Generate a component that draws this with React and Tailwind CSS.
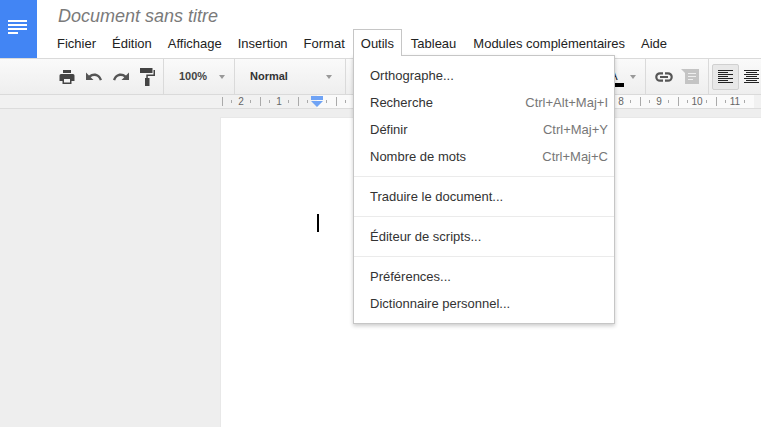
function Caret({ className = "" }) {
  return <span className={"block w-0 h-0 border-x-[3px] border-x-transparent border-t-[4px] border-t-[#999] " + className} />;
}
function Sep() {
  return <div className="w-px h-[35px] bg-[#dadada] shrink-0" />;
}
function Print() {
  return (
    <svg width="16" height="16" viewBox="0 0 16 16" className="block">
      <path fill="#444" d="M4 1h8v3H4z" />
      <path fill="#444" fillRule="evenodd" d="M2 5h12a1.5 1.5 0 0 1 1.5 1.5V12H12.5v3h-9v-3H.5V6.500A1.500 1.500 0 0 1 2 5zM5 10v3.500h6V10z" />
    </svg>
  );
}
function Undo({ flip }) {
  return (
    <svg width="16" height="12" viewBox="0 0 16 12" className={flip ? "block -scale-x-100" : "block"}>
      <path fill="#555" d="M0 1.500v7.500h7.500L4.700 6.200C5.700 5.400 6.900 5 8.300 5c2.500 0 4.600 1.400 5.500 4.500l2.200-.7C14.800 4.800 11.800 2.500 8.300 2.500c-2 0-3.800.7-5.300 2z" />
    </svg>
  );
}
function Paint() {
  return (
    <svg width="16" height="18" viewBox="0 0 16 18" className="block">
      <path fill="#444" d="M0 0h12.500v5H0z" />
      <path fill="#444" d="M13.500 2H15v6H7.800v2H9.500v8H5v-8h1.300V6.500h7.200z" />
    </svg>
  );
}
function LinkIcon() {
  return (
    <svg width="18" height="10" viewBox="0 0 18 10" className="block">
      <path fill="none" stroke="#555" strokeWidth="2.200" d="M8 1.300H5a3.700 3.700 0 0 0 0 7.400h3M10 1.300h3a3.700 3.700 0 0 1 0 7.400h-3M5 5h8" />
    </svg>
  );
}
function Comment() {
  return (
    <svg width="18" height="15" viewBox="0 0 18 15" className="block">
      <path fill="#c4c4c4" d="M4 0h14v15H4V4L0 0z" />
      <path fill="#eee" d="M7 4h8v1H7zM7 7h8v1H7zM7 10h5v1H7z" />
    </svg>
  );
}
function Align({ center }) {
  const rows = center
    ? [[0, 15], [2, 11], [0, 15], [2, 11], [0, 15], [2, 11], [0, 15]]
    : [[0, 15], [0, 10], [0, 15], [0, 10], [0, 15], [0, 10], [0, 15]];
  return (
    <svg width="15" height="13" viewBox="0 0 15 13" className="block">
      {rows.map(([x, w], i) => (
        <rect key={i} x={x} y={i * 2} width={w} height="1" fill="#222" />
      ))}
    </svg>
  );
}
function Ruler() {
  const cells = [2, 1, 0, 1, 2, 3, 4, 5, 6, 7, 8, 9, 10, 11];
  return (
    <div className="flex h-[13px] pl-[222px] bg-[#f1f1f1] border-b border-[#dcdcdc] shrink-0 overflow-hidden box-content">
      {cells.map((n, i) => (
        <div
          key={i}
          className={
            "flex w-[38px] shrink-0 h-full items-center " +
            (i > 2 ? "bg-[#fafafa]" : i === 2 ? "bg-[linear-gradient(to_right,#f1f1f1_50%,#fafafa_50%)]" : "")
          }
        >
          <span className="w-px h-[9px] bg-[#aaa] shrink-0" />
          <span className="w-[8px] shrink-0" />
          <span className="w-px h-[3px] bg-[#aaa] shrink-0" />
          <span className="w-[18px] shrink-0 text-center text-[10px] leading-none text-[#666]">
            {i >= 2 && i <= 9 ? "" : n}
          </span>
          <span className="w-px h-[3px] bg-[#aaa] shrink-0" />
        </div>
      ))}
    </div>
  );
}
function Row({ label, shortcut }) {
  return (
    <div className="flex justify-between items-center h-[27px] pl-[16px] pr-[6px] text-[13px] text-[#333]">
      <span>{label}</span>
      {shortcut && <span className="text-[#777]">{shortcut}</span>}
    </div>
  );
}
function Divider() {
  return <div className="h-px bg-[#ebebeb] my-[6px]" />;
}

export default function App() {
  return (
    <div className="relative w-[761px] h-[427px] overflow-hidden bg-[#eeeeee] flex flex-col font-['Liberation_Sans',Arial,sans-serif]">
      <header className="flex h-[58px] bg-white shrink-0">
        <div className="w-[37px] h-full bg-[#4285f4] flex items-center pl-[8px] pb-[4px] shrink-0">
          <svg width="19" height="14" viewBox="0 0 19 14" className="block">
            <path fill="#fff" d="M0 0h19v2H0zM0 4h19v2H0zM0 8h19v2H0zM0 12h10v2H0z" />
          </svg>
        </div>
        <div className="flex flex-col pl-[20px]">
          <div className="text-[18px] leading-[21px] italic text-[#7a7a7a] mt-[6px] pl-px">Document sans titre</div>
          <nav className="flex mt-[2px] text-[13px] text-[#222]">
            <span className="leading-[24px] mt-[3px]">Fichier</span>
            <span className="leading-[24px] mt-[3px] ml-[16px]">Édition</span>
            <span className="leading-[24px] mt-[3px] ml-[16px]">Affichage</span>
            <span className="leading-[24px] mt-[3px] ml-[16px]">Insertion</span>
            <span className="leading-[24px] mt-[3px] ml-[16px]">Format</span>
            <span className="relative z-20 ml-[8px] h-[27px] w-[49px] pl-[7px] pt-[2px] leading-[24px] bg-white border border-b-0 border-[#c6c6c6]">Outils</span>
            <span className="leading-[24px] mt-[3px] ml-[9px]">Tableau</span>
            <span className="leading-[24px] mt-[3px] ml-[17px]">Modules complémentaires</span>
            <span className="leading-[24px] mt-[3px] ml-[16px]">Aide</span>
          </nav>
        </div>
      </header>

      <div className="flex h-[35px] box-content items-center bg-gradient-to-b from-[#fafafa] to-[#eeeeee] border-y border-[#dadada] shrink-0">
        <div className="flex items-center w-[163px] shrink-0 pl-[59px]">
          <Print />
          <span className="ml-[11px]"><Undo /></span>
          <span className="ml-[11px]"><Undo flip /></span>
          <span className="ml-[11px]"><Paint /></span>
        </div>
        <Sep />
        <div className="flex items-center w-[70px] shrink-0 pl-[15px]">
          <span className="text-[11px] font-bold text-[#444] w-[40px]">100%</span>
          <Caret />
        </div>
        <Sep />
        <div className="flex items-center w-[110px] shrink-0 pl-[15px]">
          <span className="text-[11px] font-bold text-[#333] w-[76px]">Normal</span>
          <Caret />
        </div>
        <Sep />
        <div className="w-[264px] shrink-0" />
        <div className="relative w-[22px] h-full shrink-0">
          <span className="absolute -left-[1px] top-[9px] text-[13px] leading-[15px] text-[#222]">A</span>
          <span className="absolute left-[0px] top-[24px] w-[14px] h-[4px] bg-black" />
        </div>
        <Caret className="mr-[9px] -ml-[2px]" />
        <Sep />
        <div className="flex items-center w-[62px] shrink-0 pl-[9px]">
          <LinkIcon />
          <span className="ml-[8px]"><Comment /></span>
        </div>
        <Sep />
        <div className="flex items-center shrink-0 pl-[3px]">
          <div className="flex items-center justify-center w-[27px] h-[26px] bg-[#e8e8e8] border border-[#d0d0d0] rounded-[2px] shrink-0">
            <Align />
          </div>
          <span className="ml-[5px]"><Align center /></span>
        </div>
      </div>

      <Ruler />

      <main className="flex-1 pl-[220px] pt-[8px] min-h-0">
        <div className="h-full bg-white border-l border-t border-[#e8e8e8] pl-[96px] pt-[96px]">
          <div className="w-[2px] h-[18px] bg-black" />
        </div>
      </main>

      <div className="absolute left-[353px] top-[55px] w-[262px] h-[269px] z-10 bg-white border border-[#c6c6c6] shadow-[0_2px_4px_rgba(0,0,0,0.200)] pt-[6px]">
        <Row label="Orthographe..." />
        <Row label="Recherche" shortcut="Ctrl+Alt+Maj+I" />
        <Row label="Définir" shortcut="Ctrl+Maj+Y" />
        <Row label="Nombre de mots" shortcut="Ctrl+Maj+C" />
        <Divider />
        <Row label="Traduire le document..." />
        <Divider />
        <Row label="Éditeur de scripts..." />
        <Divider />
        <Row label="Préférences..." />
        <Row label="Dictionnaire personnel..." />
      </div>

      <svg width="12" height="12" viewBox="0 0 12 12" className="absolute left-[311px] top-[96px]">
        <path fill="#6fa3f5" d="M0 0h12v4H0zM0 5h12L6 11z" />
      </svg>
    </div>
  );
}
